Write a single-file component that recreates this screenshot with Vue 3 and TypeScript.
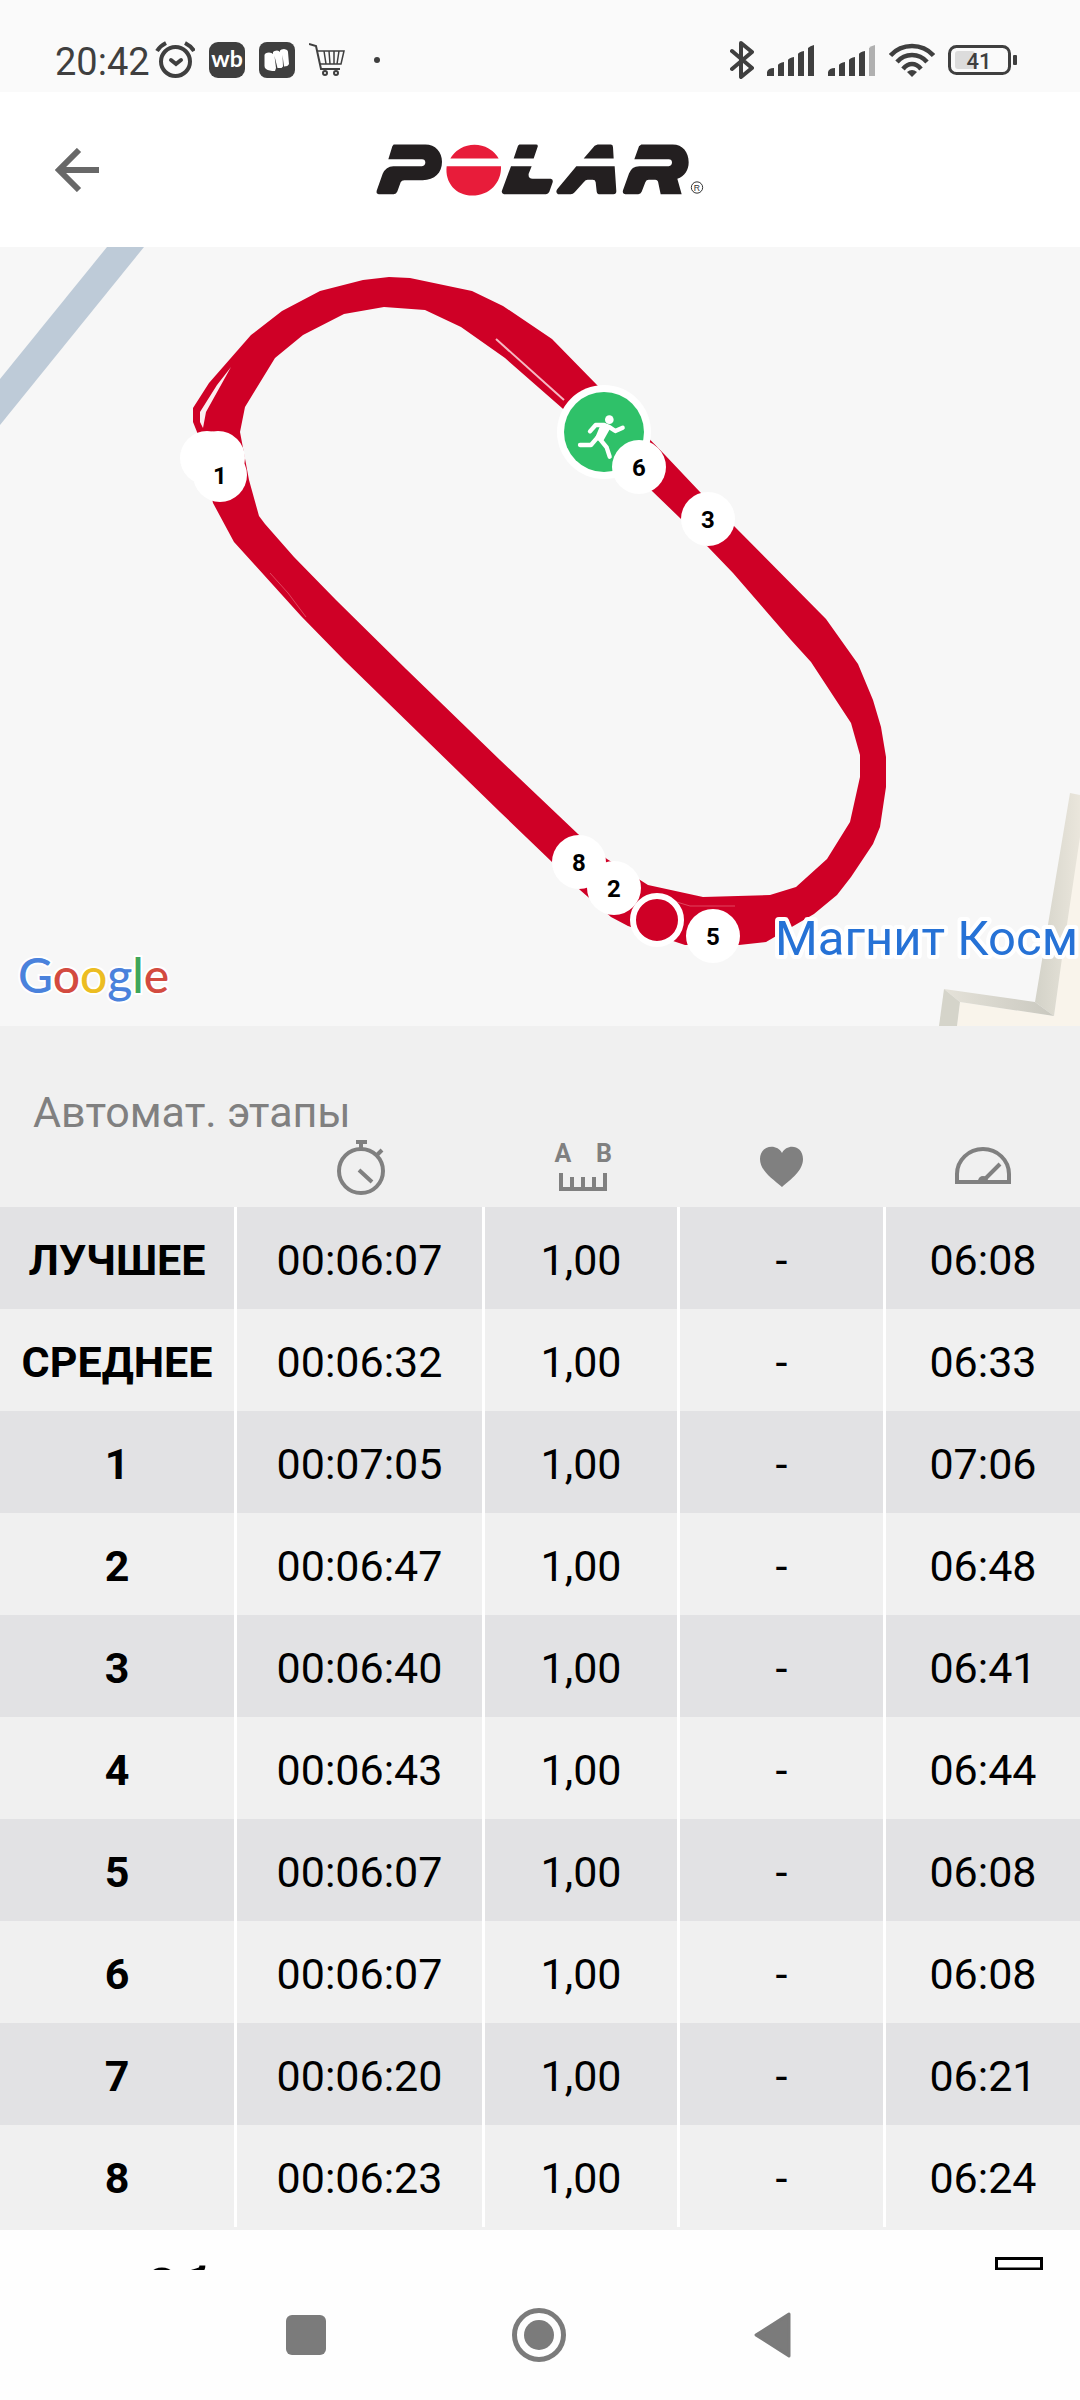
<script setup lang="ts">
interface Lap {
  label: string
  time: string
  distance: string
  heartRate: string
  pace: string
}

interface Pin {
  label: string
  x: number
  y: number
}

const laps: Lap[] = [
  { label: 'ЛУЧШЕЕ', time: '00:06:07', distance: '1,00', heartRate: '-', pace: '06:08' },
  { label: 'СРЕДНЕЕ', time: '00:06:32', distance: '1,00', heartRate: '-', pace: '06:33' },
  { label: '1', time: '00:07:05', distance: '1,00', heartRate: '-', pace: '07:06' },
  { label: '2', time: '00:06:47', distance: '1,00', heartRate: '-', pace: '06:48' },
  { label: '3', time: '00:06:40', distance: '1,00', heartRate: '-', pace: '06:41' },
  { label: '4', time: '00:06:43', distance: '1,00', heartRate: '-', pace: '06:44' },
  { label: '5', time: '00:06:07', distance: '1,00', heartRate: '-', pace: '06:08' },
  { label: '6', time: '00:06:07', distance: '1,00', heartRate: '-', pace: '06:08' },
  { label: '7', time: '00:06:20', distance: '1,00', heartRate: '-', pace: '06:21' },
  { label: '8', time: '00:06:23', distance: '1,00', heartRate: '-', pace: '06:24' },
]

const pins: Pin[] = [
  { label: '1', x: 220, y: 228 },
  { label: '6', x: 639, y: 220 },
  { label: '3', x: 708, y: 272 },
  { label: '8', x: 579, y: 615 },
  { label: '2', x: 614, y: 641 },
  { label: '5', x: 713, y: 689 },
]

const columnWidths = [237, 248, 195, 206, 194]
</script>

<template>
  <div class="screen">
    <div class="status">
      <div class="status-left">
        <span class="clock">20:42</span>
        <svg width="40" height="40" viewBox="0 0 40 40" fill="none" stroke="#3f3f3f" stroke-width="4">
          <circle cx="20.500" cy="21.500" r="14.500" />
          <path d="M16 20l5 4 5-4" stroke-linecap="round" />
          <path d="M2 11Q5 6 11 3M39 11Q36 6 30 3" />
        </svg>
        <svg width="36" height="36" viewBox="0 0 36 36">
          <rect width="36" height="36" rx="9" fill="#3f3f3f" />
          <text x="18" y="25" class="wb">wb</text>
        </svg>
        <svg width="36" height="36" viewBox="0 0 36 36">
          <rect width="36" height="36" rx="8" fill="#3f3f3f" />
          <path
            fill="#fff"
            d="M5.500 13Q6 10.500 10 10.500Q13 10.500 14 12V10Q15 8.500 18 8.500Q20 8.500 21 10V8.500Q22 7 25 7Q29 7.500 29 10L30 22Q29 24.500 25 24.500L23.500 13L24 24.500L22.500 26H18.500L15.500 14L17 26L16 29Q10 29 7 27Q5.500 26 5.500 24Z"
          />
        </svg>
        <svg width="36" height="36" viewBox="0 0 36 36" fill="none" stroke="#3f3f3f" stroke-width="2">
          <path d="M0 2l7 2 5 23h19" />
          <path d="M8 9h27l-3 13H11M15 9l2 13M20 9l1 13M25 9v13M30 9l-2 13" stroke-width="1.500" />
          <circle cx="16" cy="31" r="2" />
          <circle cx="27" cy="31" r="2" />
        </svg>
        <span class="dot"></span>
      </div>
      <div class="status-right">
        <svg width="24" height="40" viewBox="0 0 24 40" fill="none" stroke="#3f3f3f" stroke-width="4" stroke-linejoin="round" stroke-linecap="round">
          <path d="M2 11L22 28L11 37V3L22 12L2 29" />
        </svg>
        <svg width="48" height="40" viewBox="0 0 48 40" fill="#3f3f3f">
          <path d="M0 36v-4q1-4 7-4v8zM11 36V25q1-2 6-3v14zM21 36V20q1-2 6-3v19zM31 36V14q1-2 6-3v25zM41 36V8q2-2 6-3v31z" />
        </svg>
        <svg width="48" height="40" viewBox="0 0 48 40" fill="#3f3f3f">
          <path d="M0 36v-4q1-4 7-4v8zM11 36V25q1-2 6-3v14zM21 36V20q1-2 6-3v19zM31 36V14q1-2 6-3v25z" />
          <path fill="#b0b0b0" d="M41 36V8q2-2 6-3v31z" />
        </svg>
        <svg width="46" height="40" viewBox="0 0 46 40" fill="none" stroke="#3f3f3f" stroke-width="4.500">
          <path d="M1.500 15.500Q10 6 23 6T44.500 15.500M8 22Q14 15 23 15T38 22M14 29Q18 24 23 24T32 29" />
          <path d="M18 32q5-4 10 0l-5 5z" fill="#3f3f3f" stroke="none" />
        </svg>
        <svg width="70" height="40" viewBox="0 0 70 40">
          <rect x="7" y="11" width="20" height="18" rx="3" fill="#dcdcdc" />
          <rect x="1.500" y="6.500" width="60" height="27" rx="7" fill="none" stroke="#3f3f3f" stroke-width="3" />
          <rect x="65" y="15" width="4" height="10" rx="1" fill="#3f3f3f" />
          <text x="31" y="29" class="charge">41</text>
        </svg>
      </div>
    </div>

    <header class="bar">
      <button class="back" type="button" aria-label="Назад">
        <svg width="44" height="44" viewBox="0 0 44 44" fill="none" stroke="#686868" stroke-width="6">
          <path d="M24 2L4 22L24 42M4 22H44" />
        </svg>
      </button>
      <svg class="logo" width="328" height="55" viewBox="110 68 984 164" role="img" aria-label="Polar">
        <g fill="#231f20">
          <path d="M163 75H258C288 75 308 97 308 127C308 160 286 182 250 182H195Q187 182 184 188L174 216Q171 224 163 224H118Q110 224 112 214L130 163Q140 140 162 140H248Q258 138 258 129Q258 119 248 119H147L159 80Z" />
          <path d="M540 75H590Q597 75 595 82L583 117H523L536 79ZM515 140H577L568 163Q566 178 580 178H634Q642 179 640 188L630 217Q627 224 620 224H494Q485 222 488 213Z" />
          <path d="M775 75H815Q821 76 821 83L823 117H733L766 79ZM711 140H826L831 215Q831 224 822 224H778Q772 222 772 216L769 188Q768 181 760 181H745Q739 181 733 188L706 218Q701 224 694 224H656Q646 217 656 206Z" />
          <path d="M906 75H1000C1030 75 1048 98 1048 128C1048 152 1036 170 1014 178L1027 224H964L956 186Q954 181 948 181H928Q921 181 918 188L907 217Q904 224 897 224H858Q848 222 851 212L869 162Q877 140 900 140H988Q998 138 998 129Q998 119 988 119H885L899 80Z" />
        </g>
        <path fill="#e81c3a" d="M333 117A82 78 0 0 1 478 117ZM322 140H485C487 190 450 228 399 228C350 228 316 190 322 140Z" />
        <circle cx="1073" cy="204" r="17" fill="none" stroke="#333" stroke-width="3" />
        <text x="1073" y="214" class="registered">R</text>
      </svg>
    </header>

    <svg class="map" viewBox="0 0 1080 779">
      <defs>
        <linearGradient id="wallSide" x1="0" x2="1" y1="0" y2="0">
          <stop offset="0" stop-color="#d3d2c8" />
          <stop offset="1" stop-color="#eae6dc" />
        </linearGradient>
        <linearGradient id="wallTop" x1="0" x2="1" y1="0" y2="0">
          <stop offset="0" stop-color="#e5e2d9" />
          <stop offset="1" stop-color="#c9c8bf" />
        </linearGradient>
      </defs>
      <rect width="1080" height="779" fill="#f7f7f7" />
      <path d="M107 0H144L0 178V132Z" fill="#becbd8" />

      <path d="M1080 570L1054 769L960 755L957 779H1080Z" fill="#f9f4eb" />
      <path d="M1070 546L1080 548V590L1062 711L1054 769L1035 755Z" fill="url(#wallSide)" />
      <path d="M944 742L1035 755L1054 769L960 755Z" fill="url(#wallTop)" />
      <path d="M944 742L960 755L957 779H939Z" fill="#d5d4ca" />

      <path
        class="route"
        fill-rule="evenodd"
        d="M197 185L193 175V161L209 136L251 88L282 64L320 44L363 33L389 30L410 31L472 44L503 59L552 92L597 138L665 208L700 245L735 280L826 372L858 417L873 453L881 480L886 510V540L880 580L873 597L851 630L837 648L814 667L766 695L739 698L685 698L628 679L611 670L580 643L552 615L500 565L344 413L301 369L234 295L213 256Z
           M240 185L245 160L275 111L303 88L344 67L384 60L425 63L461 80L505 111L562 161L652 244L680 271L708 300L733 326L791 393L811 415L851 476L860 508V530L850 575L827 612L796 640L770 648L703 650L648 638L607 612L578 587L500 513L406 422L336 353L294 310L265 277L259 269L249 233Z"
      />
      <path d="M231 120L217 138L200 165V175L203 181L206 165Z" fill="#fbeef0" />
      <path d="M496 92L564 153" stroke="#f6b9c4" stroke-width="2" />
      <path d="M270 326L288 346L306 370M670 653L690 659L735 659" fill="none" stroke="#e0455f" stroke-width="1" />

      <circle cx="604" cy="185" r="47" fill="#fff" />
      <circle cx="604" cy="185" r="40" fill="#2fc169" />
      <g transform="translate(540 123) scale(.3333)" fill="none" stroke="#fff" stroke-width="13" stroke-linecap="round" stroke-linejoin="round">
        <circle cx="208" cy="149" r="13" fill="#fff" stroke="none" />
        <path d="M150 184L167 165H193L206 170L226 183L248 173M178 205L200 232L209 260M172 203L153 225H120" />
        <path d="M188 166L204 174L186 206L172 204Z" fill="#fff" />
      </g>

      <circle cx="207" cy="211" r="27" fill="#fff" />
      <circle cx="218" cy="211" r="27" fill="#fff" />
      <g v-for="pin in pins" :key="pin.label">
        <circle :cx="pin.x" :cy="pin.y" r="27" fill="#fff" />
        <text :x="pin.x" :y="pin.y + 9" class="pin">{{ pin.label }}</text>
      </g>
      <circle cx="657" cy="673" r="24" fill="#cf0026" stroke="#fff" stroke-width="6" />

      <text x="775" y="708" class="place">Магнит Косм</text>
      <text x="18" y="746" class="google"><tspan fill="#4a82dc">G</tspan><tspan fill="#d34b40">o</tspan><tspan fill="#ecbd22">o</tspan><tspan fill="#4a82dc">g</tspan><tspan fill="#3fa65a">l</tspan><tspan fill="#d34b40">e</tspan></text>
    </svg>

    <section class="laps">
      <h2>Автомат. этапы</h2>
      <table>
        <colgroup>
          <col v-for="(width, i) in columnWidths" :key="i" :style="{ width: width + 'px' }" />
        </colgroup>
        <thead>
          <tr>
            <td></td>
            <th scope="col" aria-label="Время">
              <svg width="60" height="70" viewBox="0 0 60 70" fill="none" stroke="#808080" stroke-width="4">
                <circle cx="30" cy="34" r="22" />
                <path d="M25 5H36M30 5V12M46 18L51 13M28 33L41 45" />
              </svg>
            </th>
            <th scope="col" aria-label="Расстояние">
              <svg width="60" height="70" viewBox="0 0 60 70" fill="none" stroke="#808080" stroke-width="4">
                <text x="10" y="25" class="mark">A</text>
                <text x="51" y="25" class="mark">B</text>
                <path d="M8 36V52H52V36M19 40V52M30 40V52M41 40V52" />
              </svg>
            </th>
            <th scope="col" aria-label="Пульс">
              <svg width="60" height="70" viewBox="0 0 60 70" fill="#808080">
                <path d="M29 50C20 42 7 34 7 22C7 8 24 6 29 16C34 6 50 8 50 22C50 34 38 42 29 50Z" />
              </svg>
            </th>
            <th scope="col" aria-label="Темп">
              <svg width="60" height="70" viewBox="0 0 60 70" fill="none" stroke="#808080" stroke-width="4">
                <path d="M4 45V37A26 25 0 0 1 56 37V45ZM31 43L47 27" />
                <path d="M25 44a5 5 0 0 1 10 0z" fill="#808080" stroke="none" />
              </svg>
            </th>
          </tr>
        </thead>
        <tbody>
          <tr v-for="lap in laps" :key="lap.label">
            <th scope="row">{{ lap.label }}</th>
            <td>{{ lap.time }}</td>
            <td>{{ lap.distance }}</td>
            <td>{{ lap.heartRate }}</td>
            <td>{{ lap.pace }}</td>
          </tr>
        </tbody>
      </table>
    </section>

    <div class="peek">
      <span>Об</span>
      <svg width="48" height="13" viewBox="0 0 48 13">
        <path d="M1.500 1.500H46.500V12H1.500Z" fill="none" stroke="#000" stroke-width="3" />
      </svg>
    </div>

    <nav class="keys">
      <button type="button" aria-label="Последние приложения">
        <svg width="54" height="54" viewBox="0 0 54 54"><rect x="7" y="7" width="40" height="40" rx="6" fill="#7b7b7b" /></svg>
      </button>
      <button type="button" aria-label="Домой">
        <svg width="54" height="54" viewBox="0 0 54 54">
          <circle cx="27" cy="27" r="24.500" fill="none" stroke="#7b7b7b" stroke-width="5" />
          <circle cx="27" cy="27" r="15" fill="#7b7b7b" />
        </svg>
      </button>
      <button type="button" aria-label="Назад">
        <svg width="54" height="54" viewBox="0 0 54 54">
          <path d="M11 27L44 6V48Z" fill="#7b7b7b" stroke="#7b7b7b" stroke-width="3" stroke-linejoin="round" />
        </svg>
      </button>
    </nav>
  </div>
</template>

<style>
body {
  margin: 0;
  background: #fefefe;
}
</style>

<style scoped>
.screen {
  font-family: Roboto, "Noto Sans", sans-serif;
  color: #000;
  background: #fefefe;
  overflow: hidden;
}
svg {
  display: block;
  flex: none;
}
button {
  border: 0;
  padding: 0;
  background: none;
}
.status {
  display: flex;
  justify-content: space-between;
  align-items: center;
  box-sizing: border-box;
  height: 92px;
  padding: 28px 62px 0 55px;
  background: #fafafa;
}
.status-left,
.status-right {
  display: flex;
  align-items: center;
}
.status-left {
  gap: 14px;
}
.status-right {
  gap: 13px;
}
.clock {
  margin-right: -9px;
  padding-top: 4px;
  font-size: 38px;
  line-height: 44px;
  color: #3f3f3f;
}
.dot {
  width: 6px;
  height: 6px;
  margin-left: 15px;
  border-radius: 50%;
  background: #3f3f3f;
}
.wb {
  font: 700 23px Lato, sans-serif;
  fill: #fff;
  text-anchor: middle;
}
.charge {
  font-size: 22px;
  font-weight: 500;
  fill: #3f3f3f;
  text-anchor: middle;
}
.bar {
  display: grid;
  grid-template-columns: 1fr auto 1fr;
  align-items: center;
  height: 155px;
  padding: 0 55px;
  background: #fff;
}
.back {
  justify-self: start;
}
.registered {
  font: 26px "Liberation Sans", sans-serif;
  fill: #333;
  text-anchor: middle;
}
.map {
  width: 100%;
  height: auto;
}
.route {
  fill: #cf0026;
}
.pin {
  font-size: 24px;
  font-weight: 700;
  text-anchor: middle;
}
.place {
  font-size: 49px;
  fill: #2672d6;
  stroke: #fff;
  stroke-width: 8px;
  stroke-linejoin: round;
  paint-order: stroke;
}
.google {
  font: 500 48px Lato, sans-serif;
  stroke: #fff;
  stroke-width: 4px;
  paint-order: stroke;
}
.laps {
  padding: 61px 0 3px;
  background: #f0f0f0;
}
h2 {
  margin: 0;
  padding-left: 33px;
  font-size: 43px;
  font-weight: 400;
  line-height: 50px;
  color: #808080;
}
table {
  width: 100%;
  table-layout: fixed;
  border-collapse: separate;
  border-spacing: 0;
  font-size: 43px;
  line-height: 50px;
  text-align: center;
}
th,
td {
  padding: 0;
}
thead svg {
  margin: 0 auto;
}
.mark {
  font-size: 25px;
  font-weight: 700;
  fill: #808080;
  stroke: none;
  text-anchor: middle;
}
tbody th,
tbody td {
  padding: 28px 0 24px;
  border-right: 3px solid #fff;
}
tbody td:last-child {
  border-right: 0;
}
tbody tr:nth-child(odd) {
  background: #e2e2e4;
}
.peek {
  display: flex;
  justify-content: space-between;
  align-items: flex-start;
  box-sizing: border-box;
  height: 40px;
  padding: 27px 37px 0 144px;
  overflow: hidden;
}
.peek span {
  font-size: 52px;
  font-weight: 700;
  line-height: 62px;
}
.keys {
  display: flex;
  justify-content: center;
  height: 130px;
  padding-right: 2px;
}
.keys button {
  display: grid;
  place-items: center;
  width: 233px;
}
</style>
